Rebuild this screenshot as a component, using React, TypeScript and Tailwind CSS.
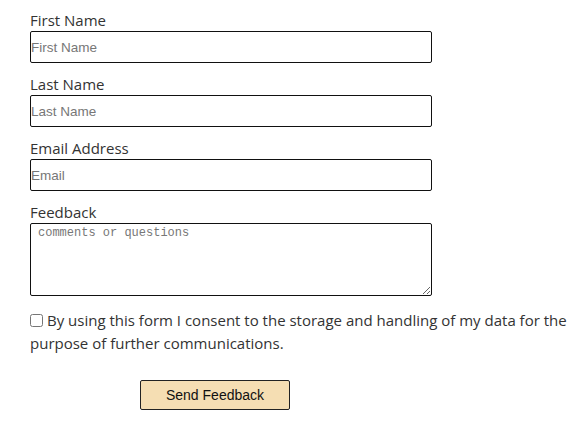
import { useState } from 'react';

const labelCls = "block mb-[1px] text-[15px] leading-[20px] text-[#333] font-['Open_Sans','Liberation_Sans',sans-serif]";
const inputCls =
  "block w-[402px] h-[32px] border-[1.5px] border-[#111] rounded-[2px] px-0 text-[13.5px] font-['Liberation_Sans',Arial,sans-serif] placeholder:text-[#777] outline-none";

export default function App() {
  const [consent, setConsent] = useState(false);

  return (
    <div className="bg-white w-[580px] h-[423px] pl-[30px] pt-[10px]">
      <form className="flex flex-col" onSubmit={(e) => e.preventDefault()}>
        <label className={labelCls}>First Name</label>
        <input className={inputCls} placeholder="First Name" />

        <label className={`${labelCls} mt-[11px]`}>Last Name</label>
        <input className={inputCls} placeholder="Last Name" />

        <label className={`${labelCls} mt-[11px]`}>Email Address</label>
        <input className={inputCls} placeholder="Email" />

        <label className={`${labelCls} mt-[11px]`}>Feedback</label>
        <textarea
          className="block w-[402px] h-[73px] border-[1.5px] border-[#111] rounded-[2px] px-[7px] py-[1px] text-[12px] leading-[16px] font-['Liberation_Mono',monospace] placeholder:text-[#777] outline-none"
          placeholder="comments or questions"
        />

        <div className="mt-[13px] pr-[2px] text-[15px] leading-[23px] text-[#333] font-['Open_Sans','Liberation_Sans',sans-serif]">
          <input
            type="checkbox"
            checked={consent}
            onChange={(e) => setConsent(e.target.checked)}
            className="inline-block align-[-1px] w-[13px] h-[13px] mr-[4px]"
          />
          By using this form I consent to the storage and handling of my data for the purpose of further communications.
        </div>

        <button
          type="submit"
          className="mt-[25px] ml-[110px] w-[150px] h-[30px] bg-[#f5deb3] border border-[#222] rounded-[2px] text-[14px] text-[#111] font-['Liberation_Sans',Arial,sans-serif]"
        >
          Send Feedback
        </button>
      </form>
    </div>
  );
}
